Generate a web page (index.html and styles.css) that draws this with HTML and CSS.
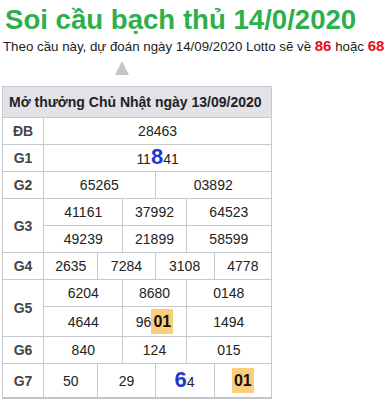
FILE: index.html
```html
<!DOCTYPE html>
<html lang="vi">
<head>
<meta charset="utf-8">
<link rel="stylesheet" href="styles.css">
</head>
<body>
<h1 class="title">Soi cầu bạch thủ 14/0/2020</h1>
<p class="sub">Theo cầu này, dự đoán ngày 14/09/2020 Lotto sẽ về <b class="red">86</b> hoặc <b class="red">68</b></p>
<div class="arrow-row"><span class="arrow"></span></div>
<table class="kq">
<colgroup>
<col class="c0"><col class="c1"><col class="c2"><col class="c3"><col class="c4"><col class="c5"><col class="c6">
</colgroup>
<thead>
<tr><th colspan="7" class="head">Mở thưởng Chủ Nhật ngày 13/09/2020</th></tr>
</thead>
<tbody>
<tr><td class="lbl">ĐB</td><td colspan="6">28463</td></tr>
<tr><td class="lbl">G1</td><td colspan="6">11<span class="big">8</span>41</td></tr>
<tr><td class="lbl">G2</td><td colspan="3">65265</td><td colspan="3">03892</td></tr>
<tr><td class="lbl" rowspan="2">G3</td><td colspan="2">41161</td><td colspan="2">37992</td><td colspan="2">64523</td></tr>
<tr><td colspan="2">49239</td><td colspan="2">21899</td><td colspan="2">58599</td></tr>
<tr><td class="lbl">G4</td><td>2635</td><td colspan="2">7284</td><td colspan="2">3108</td><td>4778</td></tr>
<tr><td class="lbl" rowspan="2">G5</td><td colspan="2">6204</td><td colspan="2">8680</td><td colspan="2">0148</td></tr>
<tr class="g5b"><td colspan="2">4644</td><td colspan="2">96<span class="hl">01</span></td><td colspan="2">1494</td></tr>
<tr><td class="lbl">G6</td><td colspan="2">840</td><td colspan="2">124</td><td colspan="2">015</td></tr>
<tr class="g7"><td class="lbl">G7</td><td>50</td><td colspan="2">29</td><td colspan="2"><span class="big">6</span>4</td><td><span class="hl">01</span></td></tr>
</tbody>
</table>
</body>
</html>
```
FILE: styles.css
```css
html, body {
  margin: 0;
  padding: 0;
  background: #fff;
}
body {
  font-family: "Liberation Sans", Arial, sans-serif;
  color: #222;
  padding: 0 2px;
}
.title {
  margin: 0;
  padding: 4px 0 0 3px;
  font-size: 27.6px;
  line-height: 32px;
  font-weight: bold;
  color: #2daf4b;
}
.sub {
  margin: 0;
  padding-left: 1px;
  font-size: 13.3px;
  line-height: 20px;
  color: #222;
  white-space: nowrap;
}
.red {
  color: #e0101a;
  font-size: 15px;
}
.arrow-row {
  height: 29px;
  padding-left: 113px;
  display: flex;
  align-items: flex-end;
}
.arrow {
  display: block;
  width: 0;
  height: 0;
  border-left: 7px solid transparent;
  border-right: 7px solid transparent;
  border-bottom: 14px solid #c4c4c4;
  margin-bottom: 11px;
}
.kq {
  border-collapse: collapse;
  table-layout: fixed;
  width: 270px;
  font-size: 14px;
  border: 1px solid #c4c4cc;
  border-bottom: 2px solid #c4c4cc;
}
.c0 { width: 41px; }
.c1 { width: 54px; }
.c2 { width: 25px; }
.c3 { width: 32px; }
.c4 { width: 31px; }
.c5 { width: 28px; }
.c6 { width: 57px; }
.kq th, .kq td {
  border: 1px solid #c8c8d0;
  text-align: center;
  padding: 0;
  height: 26px;
  line-height: 16px;
}
.kq .head {
  background: #e2e2e8;
  text-align: left;
  padding-left: 6px;
  height: 30px;
  font-weight: bold;
  color: #222;
}
.kq .lbl {
  font-weight: bold;
  color: #444;
}
.big {
  color: #1a3ad0;
  font-weight: bold;
  font-size: 22px;
}
.hl {
  background: #fbcf79;
  color: #111;
  font-weight: bold;
  font-size: 16px;
  padding: 4px 2px;
}
.g5b td {
  height: 29px;
}
.g7 td {
  height: 33px;
}
```
